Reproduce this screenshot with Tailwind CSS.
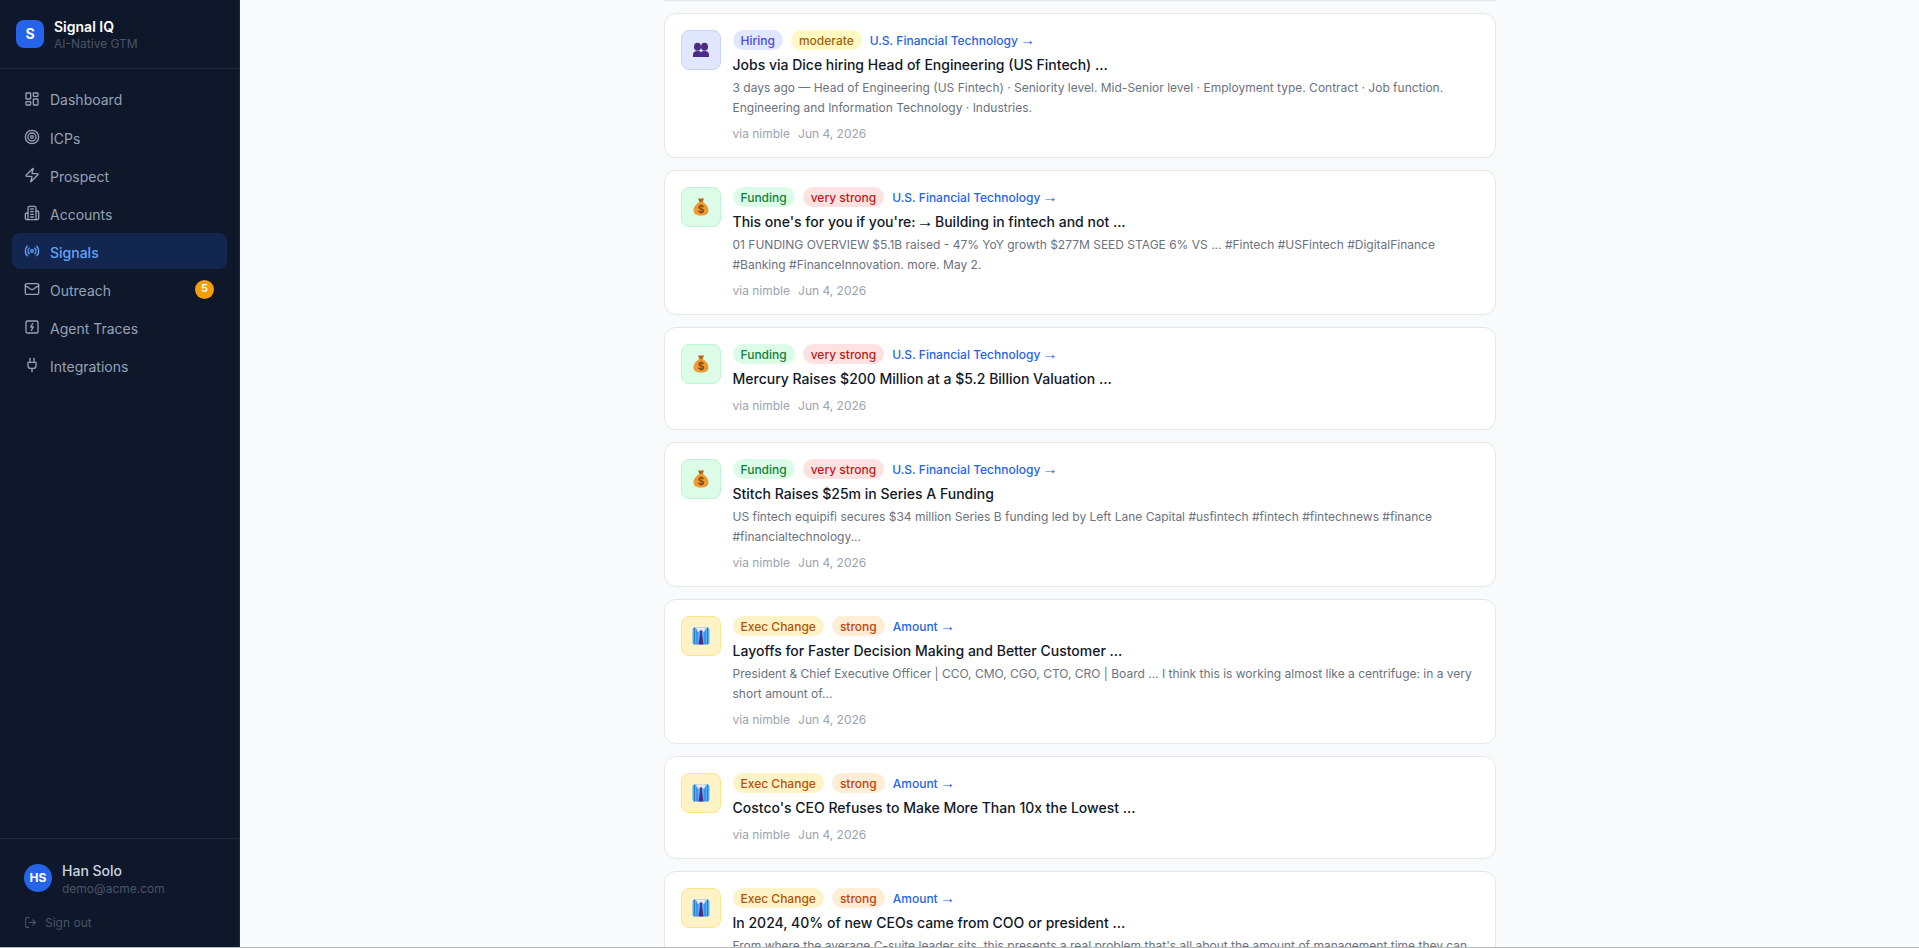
<!DOCTYPE html>
<html lang="en">
  <head>
    <meta charset="UTF-8" />
    <meta name="viewport" content="width=device-width, initial-scale=1.0" />
    <title>Signals | Signal IQ</title>
    <script src="https://cdn.jsdelivr.net/npm/@tailwindcss/browser@4"></script>
  </head>
  <body class="h-screen overflow-hidden bg-[#f8fafc] font-['Inter',sans-serif]">
    <div class="flex h-[948px] overflow-hidden border-b border-[#b8b8b8]">
      <!-- sidebar -->
      <aside class="w-[240px] shrink-0 h-full flex flex-col bg-[#0f172a] border-r border-[#1e293b]">
        <div class="h-[69px] flex items-center gap-[10px] px-4 border-b border-[#1e293b]">
          <div class="w-7 h-7 rounded-lg bg-[#2563eb] flex items-center justify-center text-white text-sm font-bold">S</div>
          <div class="pt-[2px]">
            <div class="text-sm font-semibold leading-[18px] text-white">Signal IQ</div>
            <div class="text-xs leading-[16px] text-[#475569]">AI-Native GTM</div>
          </div>
        </div>
        <nav class="flex-1 px-3 pt-[12px] flex flex-col gap-[2px] text-sm text-[#94a3b8]">
          <a class="h-9 flex items-center gap-[10px] px-3 rounded-lg">
            <svg class="w-4 h-4" viewBox="0 0 24 24" fill="none" stroke="currentColor" stroke-width="2" stroke-linecap="round" stroke-linejoin="round"><rect x="3" y="3" width="7" height="9" rx="1"/><rect x="14" y="3" width="7" height="5" rx="1"/><rect x="14" y="12" width="7" height="9" rx="1"/><rect x="3" y="16" width="7" height="5" rx="1"/></svg>
            <span class="pt-[2px]">Dashboard</span>
          </a>
          <a class="h-9 flex items-center gap-[10px] px-3 rounded-lg">
            <svg class="w-4 h-4" viewBox="0 0 24 24" fill="none" stroke="currentColor" stroke-width="2" stroke-linecap="round" stroke-linejoin="round"><circle cx="12" cy="12" r="10"/><circle cx="12" cy="12" r="6"/><circle cx="12" cy="12" r="2"/></svg>
            <span class="pt-[3px]">ICPs</span>
          </a>
          <a class="h-9 flex items-center gap-[10px] px-3 rounded-lg">
            <svg class="w-4 h-4" viewBox="0 0 24 24" fill="none" stroke="currentColor" stroke-width="2" stroke-linecap="round" stroke-linejoin="round"><path d="M4 14a1 1 0 0 1-.78-1.63l9.9-10.2a.5.5 0 0 1 .86.46l-1.92 6.02A1 1 0 0 0 13 10h7a1 1 0 0 1 .78 1.63l-9.9 10.2a.5.5 0 0 1-.86-.46l1.92-6.02A1 1 0 0 0 11 14z"/></svg>
            <span class="pt-[3px]">Prospect</span>
          </a>
          <a class="h-9 flex items-center gap-[10px] px-3 rounded-lg">
            <svg class="w-4 h-4" viewBox="0 0 24 24" fill="none" stroke="currentColor" stroke-width="2" stroke-linecap="round" stroke-linejoin="round"><path d="M6 22V4a2 2 0 0 1 2-2h8a2 2 0 0 1 2 2v18Z"/><path d="M6 12H4a2 2 0 0 0-2 2v6a2 2 0 0 0 2 2h2"/><path d="M18 9h2a2 2 0 0 1 2 2v9a2 2 0 0 1-2 2h-2"/><path d="M10 6h4"/><path d="M10 10h4"/><path d="M10 14h4"/><path d="M10 18h4"/></svg>
            <span class="pt-[3px]">Accounts</span>
          </a>
          <a class="h-9 flex items-center gap-[10px] px-3 rounded-lg bg-[#13264f] text-[#60a5fa] font-medium">
            <svg class="w-4 h-4" viewBox="0 0 24 24" fill="none" stroke="currentColor" stroke-width="2" stroke-linecap="round" stroke-linejoin="round"><path d="M4.9 19.1C1 15.2 1 8.8 4.9 4.9"/><path d="M7.8 16.2c-2.3-2.3-2.3-6.1 0-8.5"/><circle cx="12" cy="12" r="2"/><path d="M16.2 7.8c2.3 2.3 2.3 6.1 0 8.5"/><path d="M19.1 4.9C23 8.8 23 15.1 19.1 19"/></svg>
            <span class="pt-[3px]">Signals</span>
          </a>
          <a class="h-9 flex items-center gap-[10px] px-3 rounded-lg">
            <svg class="w-4 h-4" viewBox="0 0 24 24" fill="none" stroke="currentColor" stroke-width="2" stroke-linecap="round" stroke-linejoin="round"><rect x="2" y="4" width="20" height="16" rx="2"/><path d="m22 7-8.97 5.7a1.94 1.94 0 0 1-2.06 0L2 7"/></svg>
            <span class="pt-[3px]">Outreach</span>
            <span class="ml-auto mr-px w-[19px] h-[19px] rounded-full bg-[#f59e0b] text-white text-[11px] font-semibold flex items-center justify-center">5</span>
          </a>
          <a class="h-9 flex items-center gap-[10px] px-3 rounded-lg">
            <svg class="w-4 h-4" viewBox="0 0 24 24" fill="none" stroke="currentColor" stroke-width="2" stroke-linecap="round" stroke-linejoin="round"><rect x="3" y="3" width="18" height="18" rx="2"/><path d="M13 7l-3 5h4l-3 5"/></svg>
            <span class="pt-[3px]">Agent Traces</span>
          </a>
          <a class="h-9 flex items-center gap-[10px] px-3 rounded-lg">
            <svg class="w-4 h-4" viewBox="0 0 24 24" fill="none" stroke="currentColor" stroke-width="2" stroke-linecap="round" stroke-linejoin="round"><path d="M12 22v-5"/><path d="M9 8V2"/><path d="M15 8V2"/><path d="M18 8v5a4 4 0 0 1-4 4h-4a4 4 0 0 1-4-4V8Z"/></svg>
            <span class="pt-[3px]">Integrations</span>
          </a>
        </nav>
        <div class="h-[109px] border-t border-[#1e293b] px-6 pt-5">
          <div class="flex items-center gap-[10px]">
            <div class="w-7 h-7 rounded-full bg-[#2563eb] flex items-center justify-center text-white text-xs font-bold">HS</div>
            <div class="pt-[2px]">
              <div class="text-sm leading-5 font-medium text-[#cbd5e1]">Han Solo</div>
              <div class="text-xs leading-4 text-[#475569]">demo@acme.com</div>
            </div>
          </div>
          <div class="mt-4 flex items-center gap-2 text-xs text-[#475569]">
            <svg class="w-[13px] h-[13px]" viewBox="0 0 24 24" fill="none" stroke="currentColor" stroke-width="2" stroke-linecap="round" stroke-linejoin="round"><path d="M9 21H5a2 2 0 0 1-2-2V5a2 2 0 0 1 2-2h4"/><polyline points="16 17 21 12 16 7"/><line x1="21" y1="12" x2="9" y2="12"/></svg>
            <span class="pt-[2px]">Sign out</span>
          </div>
        </div>
      </aside>

      <!-- signal feed, scrolled -->
      <main class="flex-1 h-full overflow-hidden">
        <div class="w-[832px] mx-auto flex flex-col gap-3">
          <div class="h-px bg-[#e5e7eb]"></div>

          <div class="flex gap-3 bg-white border border-[#e5e7eb] rounded-xl p-4">
            <div class="w-10 h-10 shrink-0 rounded-lg bg-[#e0e7ff] border border-[#c7d2fe] flex items-center justify-center">
              <svg class="w-[18px] h-[18px]" viewBox="0 0 18 18"><ellipse cx="5.500" cy="5.800" rx="3.500" ry="4" fill="#4c2a85"/><ellipse cx="12.500" cy="5.800" rx="3.500" ry="4" fill="#4c2a85"/><path d="M1 16v-2.500c0-2.500 2-3.500 4.500-3.500 1.500 0 2.800.4 3.500 1.200.7-.8 2-1.200 3.500-1.200 2.500 0 4.500 1 4.500 3.500V16z" fill="#4c2a85"/></svg>
            </div>
            <div class="flex-1 min-w-0">
              <div class="h-5 flex items-center gap-2 text-xs font-medium">
                <span class="h-5 pt-[2px] px-2 rounded-full flex items-center bg-[#e0e7ff] text-[#4f46e5]">Hiring</span>
                <span class="h-5 pt-[2px] px-2 rounded-full flex items-center bg-[#fef9c3] text-[#a16207]">moderate</span>
                <span class="whitespace-nowrap text-[#2563eb]">U.S. Financial Technology <span class="font-['Liberation_Sans'] text-[15px] leading-none -mx-px">→</span></span>
              </div>
              <h3 class="mt-[5px] text-sm leading-5 font-medium text-[#111827]">Jobs via Dice hiring Head of Engineering (US Fintech) ...</h3>
              <p class="mt-[3px] text-xs leading-[19.5px] text-[#6b7280]">3 days ago — Head of Engineering (US Fintech) · Seniority level. Mid-Senior level · Employment type. Contract · Job function. Engineering and Information Technology · Industries.</p>
              <div class="mt-2 pt-px -mb-px flex gap-2 text-xs text-[#9ca3af]"><span>via nimble</span><span>Jun 4, 2026</span></div>
            </div>
          </div>

          <div class="flex gap-3 bg-white border border-[#e5e7eb] rounded-xl p-4">
            <div class="w-10 h-10 shrink-0 rounded-lg bg-[#dcfce7] border border-[#bbf7d0] flex items-center justify-center">
              <svg class="w-[18px] h-[18px]" viewBox="0 0 18 18"><path d="M6 .5h6l-1.500 3.500h-3z" fill="#b8651c"/><path d="M7 4h4c3 2 5.500 5 5.500 8.200 0 3.300-2.500 5.300-7.500 5.300s-7.500-2-7.500-5.300C1.500 9 4 6 7 4z" fill="#ec9a32"/><text x="9" y="14.500" text-anchor="middle" font-size="10" font-weight="700" fill="#7a4a10" font-family="Inter">$</text></svg>
            </div>
            <div class="flex-1 min-w-0">
              <div class="h-5 flex items-center gap-2 text-xs font-medium">
                <span class="h-5 pt-[2px] px-2 rounded-full flex items-center bg-[#dcfce7] text-[#15803d]">Funding</span>
                <span class="h-5 pt-[2px] px-2 rounded-full flex items-center bg-[#fee2e2] text-[#b91c1c]">very strong</span>
                <span class="whitespace-nowrap text-[#2563eb]">U.S. Financial Technology <span class="font-['Liberation_Sans'] text-[15px] leading-none -mx-px">→</span></span>
              </div>
              <h3 class="mt-[5px] text-sm leading-5 font-medium text-[#111827]">This one's for you if you're: <span class="font-['Liberation_Sans'] text-[17px] leading-none -mx-[2.5px]">→</span> Building in fintech and not ...</h3>
              <p class="mt-[3px] text-xs leading-[19.5px] text-[#6b7280]">01 FUNDING OVERVIEW $5.1B raised - 47% YoY growth $277M SEED STAGE 6% VS ... #Fintech #USFintech #DigitalFinance #Banking #FinanceInnovation. more. May 2.</p>
              <div class="mt-2 pt-px -mb-px flex gap-2 text-xs text-[#9ca3af]"><span>via nimble</span><span>Jun 4, 2026</span></div>
            </div>
          </div>

          <div class="flex gap-3 bg-white border border-[#e5e7eb] rounded-xl p-4">
            <div class="w-10 h-10 shrink-0 rounded-lg bg-[#dcfce7] border border-[#bbf7d0] flex items-center justify-center">
              <svg class="w-[18px] h-[18px]" viewBox="0 0 18 18"><path d="M6 .5h6l-1.500 3.500h-3z" fill="#b8651c"/><path d="M7 4h4c3 2 5.500 5 5.500 8.200 0 3.300-2.500 5.300-7.500 5.300s-7.500-2-7.500-5.300C1.500 9 4 6 7 4z" fill="#ec9a32"/><text x="9" y="14.500" text-anchor="middle" font-size="10" font-weight="700" fill="#7a4a10" font-family="Inter">$</text></svg>
            </div>
            <div class="flex-1 min-w-0">
              <div class="h-5 flex items-center gap-2 text-xs font-medium">
                <span class="h-5 pt-[2px] px-2 rounded-full flex items-center bg-[#dcfce7] text-[#15803d]">Funding</span>
                <span class="h-5 pt-[2px] px-2 rounded-full flex items-center bg-[#fee2e2] text-[#b91c1c]">very strong</span>
                <span class="whitespace-nowrap text-[#2563eb]">U.S. Financial Technology <span class="font-['Liberation_Sans'] text-[15px] leading-none -mx-px">→</span></span>
              </div>
              <h3 class="mt-[5px] text-sm leading-5 font-medium text-[#111827]">Mercury Raises $200 Million at a $5.2 Billion Valuation ...</h3>
              <div class="mt-2 pt-px -mb-px flex gap-2 text-xs text-[#9ca3af]"><span>via nimble</span><span>Jun 4, 2026</span></div>
            </div>
          </div>

          <div class="flex gap-3 bg-white border border-[#e5e7eb] rounded-xl p-4">
            <div class="w-10 h-10 shrink-0 rounded-lg bg-[#dcfce7] border border-[#bbf7d0] flex items-center justify-center">
              <svg class="w-[18px] h-[18px]" viewBox="0 0 18 18"><path d="M6 .5h6l-1.500 3.500h-3z" fill="#b8651c"/><path d="M7 4h4c3 2 5.500 5 5.500 8.200 0 3.300-2.500 5.300-7.500 5.300s-7.500-2-7.500-5.300C1.500 9 4 6 7 4z" fill="#ec9a32"/><text x="9" y="14.500" text-anchor="middle" font-size="10" font-weight="700" fill="#7a4a10" font-family="Inter">$</text></svg>
            </div>
            <div class="flex-1 min-w-0">
              <div class="h-5 flex items-center gap-2 text-xs font-medium">
                <span class="h-5 pt-[2px] px-2 rounded-full flex items-center bg-[#dcfce7] text-[#15803d]">Funding</span>
                <span class="h-5 pt-[2px] px-2 rounded-full flex items-center bg-[#fee2e2] text-[#b91c1c]">very strong</span>
                <span class="whitespace-nowrap text-[#2563eb]">U.S. Financial Technology <span class="font-['Liberation_Sans'] text-[15px] leading-none -mx-px">→</span></span>
              </div>
              <h3 class="mt-[5px] text-sm leading-5 font-medium text-[#111827]">Stitch Raises $25m in Series A Funding</h3>
              <p class="mt-[3px] text-xs leading-[19.5px] text-[#6b7280]">US fintech equipifi secures $34 million Series B funding led by Left Lane Capital #usfintech #fintech #fintechnews #finance #financialtechnology...</p>
              <div class="mt-2 pt-px -mb-px flex gap-2 text-xs text-[#9ca3af]"><span>via nimble</span><span>Jun 4, 2026</span></div>
            </div>
          </div>

          <div class="flex gap-3 bg-white border border-[#e5e7eb] rounded-xl p-4">
            <div class="w-10 h-10 shrink-0 rounded-lg bg-[#fef3c7] border border-[#fde68a] flex items-center justify-center">
              <svg class="w-[18px] h-[18px]" viewBox="0 0 18 18"><rect x=".5" y=".5" width="17" height="17" rx="2" fill="#55b0f2"/><path d="M2.500 .5v17M5 .5v17M13 .5v17M15.500 .5v17" stroke="#2a78dc" stroke-width="1"/><path d="M3.500 .5h11L12 5 9 3.500 6 5z" fill="#ece6f6"/><path d="M7.700 3.500h2.600l-.5 2.500 1.700 11.500H6.500L8.200 6z" fill="#4c2a85"/></svg>
            </div>
            <div class="flex-1 min-w-0">
              <div class="h-5 flex items-center gap-2 text-xs font-medium">
                <span class="h-5 pt-[2px] px-2 rounded-full flex items-center bg-[#fef3c7] text-[#b45309]">Exec Change</span>
                <span class="h-5 pt-[2px] px-2 rounded-full flex items-center bg-[#ffedd5] text-[#c2410c]">strong</span>
                <span class="whitespace-nowrap text-[#2563eb]">Amount <span class="font-['Liberation_Sans'] text-[15px] leading-none -mx-px">→</span></span>
              </div>
              <h3 class="mt-[5px] text-sm leading-5 font-medium text-[#111827]">Layoffs for Faster Decision Making and Better Customer ...</h3>
              <p class="mt-[3px] text-xs leading-[19.5px] text-[#6b7280]">President &amp; Chief Executive Officer | CCO, CMO, CGO, CTO, CRO | Board ... I think this is working almost like a centrifuge: in a very short amount of...</p>
              <div class="mt-2 pt-px -mb-px flex gap-2 text-xs text-[#9ca3af]"><span>via nimble</span><span>Jun 4, 2026</span></div>
            </div>
          </div>

          <div class="flex gap-3 bg-white border border-[#e5e7eb] rounded-xl p-4">
            <div class="w-10 h-10 shrink-0 rounded-lg bg-[#fef3c7] border border-[#fde68a] flex items-center justify-center">
              <svg class="w-[18px] h-[18px]" viewBox="0 0 18 18"><rect x=".5" y=".5" width="17" height="17" rx="2" fill="#55b0f2"/><path d="M2.500 .5v17M5 .5v17M13 .5v17M15.500 .5v17" stroke="#2a78dc" stroke-width="1"/><path d="M3.500 .5h11L12 5 9 3.500 6 5z" fill="#ece6f6"/><path d="M7.700 3.500h2.600l-.5 2.500 1.700 11.500H6.500L8.200 6z" fill="#4c2a85"/></svg>
            </div>
            <div class="flex-1 min-w-0">
              <div class="h-5 flex items-center gap-2 text-xs font-medium">
                <span class="h-5 pt-[2px] px-2 rounded-full flex items-center bg-[#fef3c7] text-[#b45309]">Exec Change</span>
                <span class="h-5 pt-[2px] px-2 rounded-full flex items-center bg-[#ffedd5] text-[#c2410c]">strong</span>
                <span class="whitespace-nowrap text-[#2563eb]">Amount <span class="font-['Liberation_Sans'] text-[15px] leading-none -mx-px">→</span></span>
              </div>
              <h3 class="mt-[5px] text-sm leading-5 font-medium text-[#111827]">Costco's CEO Refuses to Make More Than 10x the Lowest ...</h3>
              <div class="mt-2 pt-px -mb-px flex gap-2 text-xs text-[#9ca3af]"><span>via nimble</span><span>Jun 4, 2026</span></div>
            </div>
          </div>

          <div class="flex gap-3 bg-white border border-[#e5e7eb] rounded-xl p-4">
            <div class="w-10 h-10 shrink-0 rounded-lg bg-[#fef3c7] border border-[#fde68a] flex items-center justify-center">
              <svg class="w-[18px] h-[18px]" viewBox="0 0 18 18"><rect x=".5" y=".5" width="17" height="17" rx="2" fill="#55b0f2"/><path d="M2.500 .5v17M5 .5v17M13 .5v17M15.500 .5v17" stroke="#2a78dc" stroke-width="1"/><path d="M3.500 .5h11L12 5 9 3.500 6 5z" fill="#ece6f6"/><path d="M7.700 3.500h2.600l-.5 2.500 1.700 11.500H6.500L8.200 6z" fill="#4c2a85"/></svg>
            </div>
            <div class="flex-1 min-w-0">
              <div class="h-5 flex items-center gap-2 text-xs font-medium">
                <span class="h-5 pt-[2px] px-2 rounded-full flex items-center bg-[#fef3c7] text-[#b45309]">Exec Change</span>
                <span class="h-5 pt-[2px] px-2 rounded-full flex items-center bg-[#ffedd5] text-[#c2410c]">strong</span>
                <span class="whitespace-nowrap text-[#2563eb]">Amount <span class="font-['Liberation_Sans'] text-[15px] leading-none -mx-px">→</span></span>
              </div>
              <h3 class="mt-[5px] text-sm leading-5 font-medium text-[#111827]">In 2024, 40% of new CEOs came from COO or president ...</h3>
              <p class="mt-[3px] text-xs leading-[19.5px] text-[#6b7280]">From where the average C-suite leader sits, this presents a real problem that's all about the amount of management time they can devote to each of their direct reports and the decisions they have to make.</p>
              <div class="mt-2 pt-px -mb-px flex gap-2 text-xs text-[#9ca3af]"><span>via nimble</span><span>Jun 4, 2026</span></div>
            </div>
          </div>
        </div>
      </main>
    </div>
  </body>
</html>
